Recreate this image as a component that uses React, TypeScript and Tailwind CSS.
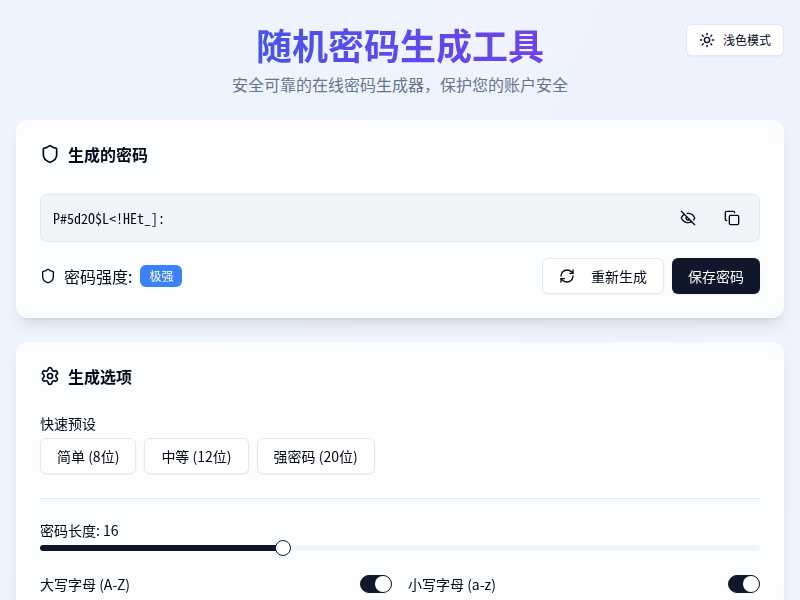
import { useState } from "react";
import { Copy, EyeOff, RefreshCw, Settings, Shield, Sun } from "lucide-react";

const presets = [
  { name: "简单 (8位)", length: 8 },
  { name: "中等 (12位)", length: 12 },
  { name: "强密码 (20位)", length: 20 },
];

const charTypes = [
  { id: "uppercase", label: "大写字母 (A-Z)" },
  { id: "lowercase", label: "小写字母 (a-z)" },
];

const MIN_LENGTH = 4;
const MAX_LENGTH = 40;

export default function App() {
  const [length, setLength] = useState(16);
  const [enabled, setEnabled] = useState<Record<string, boolean>>({
    uppercase: true,
    lowercase: true,
  });

  const percent = ((length - MIN_LENGTH) / (MAX_LENGTH - MIN_LENGTH)) * 100;

  return (
    <div className="min-h-screen bg-linear-to-br from-[#eff6ff] via-[#eef2ff] to-[#faf5ff] bg-[length:100%_300%] font-['Noto_Sans_CJK_SC',sans-serif] text-[#020817]">
      <div className="mx-auto max-w-4xl px-4 py-6">
        {/* Header */}
        <header className="relative mb-6 text-center">
          <h1 className="bg-linear-to-r/srgb from-[#2563eb] to-[#9333ea] bg-clip-text text-4xl font-bold text-transparent">
            随机密码生成工具
          </h1>
          <p className="mt-2 text-base text-[#64748b]">
            安全可靠的在线密码生成器，保护您的账户安全
          </p>
          <button className="absolute top-0 right-0 flex h-8 items-center gap-2 rounded-md border border-slate-200 bg-white px-3 text-xs shadow-xs">
            <Sun className="h-4 w-4" />
            浅色模式
          </button>
        </header>

        <main className="space-y-6">
          {/* Generated password */}
          <section className="rounded-xl bg-white/80 p-6 shadow-lg backdrop-blur-sm">
            <h2 className="mb-[30px] flex items-center gap-2 text-base leading-5 font-semibold">
              <Shield className="h-5 w-5" />
              生成的密码
            </h2>
            <div className="flex h-12 items-center rounded-md border border-slate-200 bg-slate-100 pr-[11px] pl-3">
              <input
                readOnly
                aria-label="生成的密码"
                value="P#5d2O$L<!HEt_]:"
                className="min-w-0 flex-1 bg-transparent font-['Noto_Sans_Mono_CJK_SC','Noto_Sans_CJK_SC',monospace] text-sm outline-none"
              />
              <div className="flex gap-3">
                <button aria-label="隐藏密码" className="flex h-8 w-8 items-center justify-center">
                  <EyeOff className="h-4 w-4" />
                </button>
                <button aria-label="复制密码" className="flex h-8 w-8 items-center justify-center">
                  <Copy className="h-4 w-4" />
                </button>
              </div>
            </div>
            <div className="mt-4 flex items-center justify-between">
              <div className="flex items-center gap-2">
                <Shield className="h-4 w-4" />
                <span>密码强度:</span>
                <span className="rounded-md border border-transparent bg-[#3b82f6] px-2 py-0.5 text-xs text-white">
                  极强
                </span>
              </div>
              <div className="flex gap-2">
                <button className="flex h-9 items-center gap-4 rounded-md border border-slate-200 bg-white px-4 text-sm shadow-xs">
                  <RefreshCw className="h-4 w-4" />
                  重新生成
                </button>
                <button className="h-9 rounded-md bg-[#0f172a] px-4 text-sm text-slate-50 shadow-xs">
                  保存密码
                </button>
              </div>
            </div>
          </section>

          {/* Options */}
          <section className="rounded-xl bg-white/80 p-6 shadow-lg backdrop-blur-sm">
            <h2 className="mb-[30px] flex items-center gap-2 text-base leading-5 font-semibold">
              <Settings className="h-5 w-5" />
              生成选项
            </h2>
            <h3 className="text-sm leading-none">快速预设</h3>
            <div className="mt-2 flex gap-2">
              {presets.map((preset) => (
                <button
                  key={preset.name}
                  onClick={() => setLength(preset.length)}
                  className="h-9 rounded-md border border-slate-200 bg-white px-4 text-sm shadow-xs"
                >
                  {preset.name}
                </button>
              ))}
            </div>

            <hr className="my-6 border-slate-200" />

            <label htmlFor="length" className="block text-sm leading-none">
              密码长度: {length}
            </label>
            <div className="relative mt-2 flex h-1.5 items-center">
              <div className="h-1.5 w-full overflow-hidden rounded-full bg-slate-100">
                <div className="h-full bg-[#0f172a]" style={{ width: `${percent}%` }} />
              </div>
              <input
                id="length"
                type="range"
                min={MIN_LENGTH}
                max={MAX_LENGTH}
                value={length}
                onChange={(e) => setLength(Number(e.target.value))}
                className="absolute inset-0 w-full appearance-none bg-transparent [&::-webkit-slider-thumb]:h-4 [&::-webkit-slider-thumb]:w-4 [&::-webkit-slider-thumb]:appearance-none [&::-webkit-slider-thumb]:rounded-full [&::-webkit-slider-thumb]:border [&::-webkit-slider-thumb]:border-[#0f172a] [&::-webkit-slider-thumb]:bg-white"
              />
            </div>

            <div className="mt-6 grid grid-cols-2 gap-4">
              {charTypes.map((type) => (
                <div key={type.id} className="flex items-center justify-between">
                  <label htmlFor={type.id} className="text-sm leading-none">
                    {type.label}
                  </label>
                  <input
                    id={type.id}
                    type="checkbox"
                    role="switch"
                    checked={enabled[type.id]}
                    onChange={() => setEnabled({ ...enabled, [type.id]: !enabled[type.id] })}
                    className="h-[18px] w-8 appearance-none rounded-full border border-[#0f172a] bg-slate-200 before:block before:h-4 before:w-4 before:rounded-full before:bg-white checked:bg-[#0f172a] checked:before:ml-auto"
                  />
                </div>
              ))}
            </div>
          </section>
        </main>
      </div>
    </div>
  );
}
